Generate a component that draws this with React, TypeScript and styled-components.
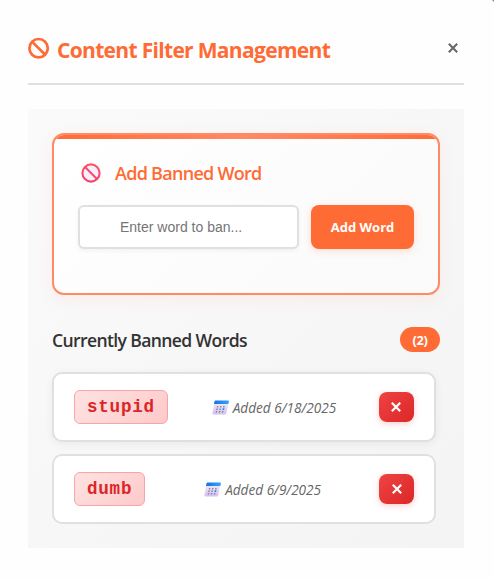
import React from 'react';
import styled, { createGlobalStyle } from 'styled-components';

const GlobalStyle = createGlobalStyle`
  *, *::before, *::after { box-sizing: border-box; }
  html, body { margin: 0; padding: 0; height: 100%; overflow: hidden; }
  body { background: #777; font-family: 'Segoe UI', 'Open Sans', sans-serif; }
  button, input, h2, h3, h4 { margin: 0; }
`;

const Modal = styled.main`
  width: 494px;
  height: 578px;
  padding: 0 30px 30px 28px;
  border-top-right-radius: 3px;
  background: #fefefe;
  overflow: hidden;
`;

const Header = styled.header`
  display: flex;
  align-items: flex-start;
  height: 85px;
  padding-top: 37px;
  border-bottom: 2px solid #e0e0e0;
`;

const HeaderIcon = styled.svg`
  flex: none;
  width: 22px;
  height: 22px;
`;

const Title = styled.h2`
  flex: 1;
  margin-left: 7px;
  font-size: 21px;
  line-height: 26px;
  font-weight: 700;
  letter-spacing: -0.68px;
  white-space: nowrap;
  color: #ff6b35;
`;

const CloseButton = styled.button`
  flex: none;
  width: 22px;
  height: 22px;
  padding: 0;
  border: 0;
  background: none;
  color: #666;
  svg { display: block; margin: auto; }
`;

const Panel = styled.section`
  width: 436px;
  height: 439px;
  margin-top: 24px;
  padding: 24px;
  background: linear-gradient(135deg, #fafafa, #f4f4f4);
`;

const AddCard = styled.section`
  height: 162px;
  border: 2px solid #ff8a65;
  border-radius: 12px;
  overflow: hidden;
  background: linear-gradient(135deg, #fff, #fafafa);
  box-shadow: 0 4px 16px rgba(255, 107, 53, 0.08);
`;

const AccentBar = styled.div`
  height: 4px;
  background: linear-gradient(90deg, #ff6b35, #ff8a65, #ff6b35);
`;

const CardHeading = styled.div`
  display: flex;
  align-items: center;
  height: 24px;
  margin: 22px 0 20px 27px;
  svg { flex: none; }
`;

const CardTitle = styled.h3`
  margin-left: 14px;
  font-size: 18px;
  line-height: 24px;
  font-weight: 600;
  letter-spacing: -0.72px;
  white-space: nowrap;
  color: #ff6b35;
`;

const Form = styled.form`
  display: flex;
  gap: 12px;
  padding-left: 24px;
`;

const WordInput = styled.input`
  width: 221px;
  height: 44px;
  padding: 0 16px 0 40px;
  border: 2px solid #e0e0e0;
  border-radius: 6px;
  outline: 0;
  background: #fff;
  font: 14px 'Liberation Sans', Arial, sans-serif;
  box-shadow: 0 2px 4px rgba(0, 0, 0, 0.05);
  &::placeholder { color: #757575; opacity: 1; }
`;

const AddButton = styled.button`
  width: 103px;
  height: 44px;
  padding: 0;
  border: 0;
  border-radius: 8px;
  background: #ff6b35;
  color: #fff;
  font: 700 13px 'Segoe UI', 'Open Sans', sans-serif;
  letter-spacing: 0;
  white-space: nowrap;
  box-shadow: 0 2px 8px rgba(255, 107, 53, 0.2);
`;

const ListHeader = styled.div`
  display: flex;
  align-items: center;
  justify-content: space-between;
  height: 25px;
  margin: 32px 0 20px;
`;

const ListTitle = styled.h4`
  font-size: 17.6px;
  line-height: 24px;
  font-weight: 600;
  letter-spacing: -0.64px;
  white-space: nowrap;
  color: #333;
`;

const Count = styled.span`
  width: 40px;
  height: 25px;
  border-radius: 12.5px;
  background: #ff6b35;
  color: #fff;
  font-size: 12.8px;
  font-weight: 700;
  letter-spacing: -0.3px;
  line-height: 27px;
  text-align: center;
`;

const WordList = styled.ul`
  display: grid;
  gap: 12px;
  width: 384px;
  margin: 0;
  padding: 0;
  list-style: none;
`;

const WordRow = styled.li`
  display: flex;
  align-items: center;
  justify-content: space-between;
  height: 70px;
  padding: 0 20px;
  border: 2px solid #e0e0e0;
  border-radius: 10px;
  background: #fff;
  &:not(:last-child) { box-shadow: 0 2px 8px rgba(0, 0, 0, 0.06); }
`;

const Word = styled.span`
  height: 34px;
  padding: 0 12px;
  border: 1px solid #f8a5a5;
  border-radius: 6px;
  background: linear-gradient(135deg, #fee2e2, #fecaca);
  color: #dc2626;
  font: 700 17.6px/32px 'Courier New', 'Liberation Mono', monospace;
  letter-spacing: 0.75px;
`;

const DateLabel = styled.span`
  display: flex;
  align-items: center;
  gap: 4px;
  padding: 1px 0 0 1px;
  color: #666;
  font-size: 13.6px;
  font-style: italic;
  line-height: 20px;
  letter-spacing: 0;
  white-space: nowrap;
  svg { flex: none; }
`;

const DeleteButton = styled.button`
  display: grid;
  place-items: center;
  width: 35px;
  height: 30px;
  padding: 0;
  border: 0;
  border-radius: 8px;
  background: linear-gradient(135deg, #ef4444, #dc2626);
  color: #fff;
  box-shadow: 0 2px 6px rgba(239, 68, 68, 0.25);
`;

function Cross({ stroke }: { stroke: number }) {
  return (
    <svg width="10" height="10" viewBox="0 0 10 10" fill="none" stroke="currentColor" strokeWidth={stroke}>
      <path d="M.8.8 9.2 9.2M9.2.8.8 9.2" />
    </svg>
  );
}

function Calendar() {
  return (
    <svg width="17" height="15" viewBox="0 0 17 15">
      <defs>
        <linearGradient id="calendar-top">
          <stop stopColor="#1471df" />
          <stop offset="1" stopColor="#35a5ff" />
        </linearGradient>
        <linearGradient id="calendar-page" x2="0" y2="1">
          <stop stopColor="#eee9f8" />
          <stop offset="1" stopColor="#d5bfee" />
        </linearGradient>
      </defs>
      <path d="M2.4 3h14l-2.2 10.4Q14 14.5 13 14.5H1.3Q.2 14.5.4 13.3Z" fill="url(#calendar-page)" />
      <path d="M3.5.5h12.7q.9 0 .7.9l-.5 2.7H2l.5-2.7Q2.7.5 3.5.5Z" fill="url(#calendar-top)" />
      <g fill="#85809f">
        <path d="M5 6h1.4l-.3 1.4H4.7ZM8.1 6h1.4l-.3 1.4H7.8ZM11.3 6h1.4l-.3 1.4H11ZM4.4 8.5h1.4l-.3 1.4H4.1ZM7.5 8.5h1.4l-.3 1.4H7.2ZM3.9 11h1.4L5 12.4H3.6ZM7 11h1.4l-.3 1.4H6.7ZM10.1 11h1.4l-.3 1.4H9.8Z" />
      </g>
      <path d="M10.8 8.3h1.7l-.4 1.8h-1.7Z" fill="#168cf2" />
    </svg>
  );
}

const words = [
  { word: 'stupid', date: '6/18/2025' },
  { word: 'dumb', date: '6/9/2025' },
];

export default function App() {
  return (
    <>
      <GlobalStyle />
      <Modal>
        <Header>
          <HeaderIcon viewBox="0 0 22 22" fill="none" stroke="#ff6b35" strokeWidth="2.7">
            <circle cx="10.6" cy="11.2" r="9.2" />
            <path d="m4 4.6 13.2 13.2" />
          </HeaderIcon>
          <Title>Content Filter Management</Title>
          <CloseButton type="button" aria-label="Close"><Cross stroke={2} /></CloseButton>
        </Header>
        <Panel>
          <AddCard>
            <AccentBar />
            <CardHeading>
              <svg width="20" height="20" viewBox="0 0 20 20">
                <defs>
                  <linearGradient id="ban-ring" x2="0" y2="1">
                    <stop stopColor="#ff5568" />
                    <stop offset="1" stopColor="#f8436b" />
                  </linearGradient>
                </defs>
                <circle cx="10" cy="10" r="8.6" fill="#f7effc" stroke="url(#ban-ring)" strokeWidth="2.1" />
                <path d="m4 4 12 12" stroke="#f84a69" strokeWidth="2" />
              </svg>
              <CardTitle>Add Banned Word</CardTitle>
            </CardHeading>
            <Form>
              <WordInput placeholder="Enter word to ban..." />
              <AddButton type="button">Add Word</AddButton>
            </Form>
          </AddCard>
          <ListHeader>
            <ListTitle>Currently Banned Words</ListTitle>
            <Count>(2)</Count>
          </ListHeader>
          <WordList>
            {words.map(({ word, date }) => (
              <WordRow key={word}>
                <Word>{word}</Word>
                <DateLabel><Calendar /><span>Added {date}</span></DateLabel>
                <DeleteButton type="button" aria-label={`Remove ${word}`}><Cross stroke={2.2} /></DeleteButton>
              </WordRow>
            ))}
          </WordList>
        </Panel>
      </Modal>
    </>
  );
}
